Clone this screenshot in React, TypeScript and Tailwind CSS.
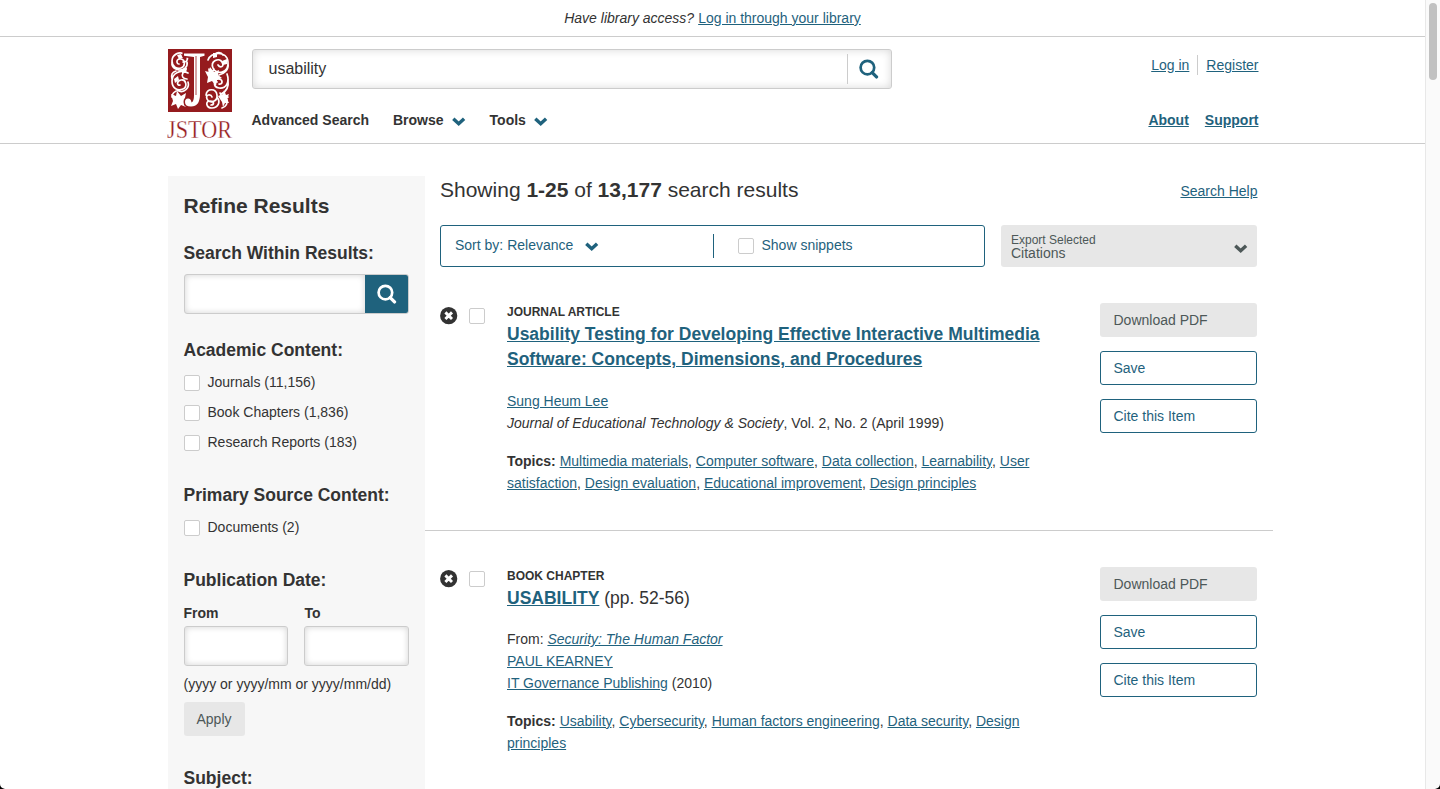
import React from "react";

const ink = "#333333";

function Chevron({ className = "" }: { className?: string }) {
  return (
    <svg width="14" height="10" viewBox="0 0 14 10" className={className} fill="none" stroke="currentColor" strokeWidth="3.4">
      <path d="M1.300 1.700 6.700 6.700 12.100 1.700" />
    </svg>
  );
}

function SearchIcon({ className = "" }: { className?: string }) {
  return (
    <svg width="20" height="20" viewBox="0 0 20 20" className={className} fill="none" stroke="currentColor" strokeWidth="2.7">
      <circle cx="8.400" cy="8.600" r="6.800" />
      <path d="M13.200 13.600l4.300 4.300" strokeWidth="3.3" strokeLinecap="round" />
    </svg>
  );
}

function Logo() {
  return (
    <svg width="66" height="92" viewBox="0 0 66 92" className="-ml-px shrink-0">
      <rect x="1" y="0" width="64" height="63" fill="#951b1e" />
      <g transform="translate(1 0)">
        <g fill="none" stroke="#fff" strokeWidth="1.700" strokeLinecap="round">
          <path d="M18 6C11 1 4 6 4 12s5 8 9 7 5-8 0-9-5 5-2 5M4 13c-1 7 8 10 14 7M18 6c3 3 1 8-3 7M19 13c1 5-3 8-7 8" />
          <path d="M20 24C13 20 4 24 4 32s6 10 11 8 3-10-2-9-4 6-1 5M20 33c2 6-4 11-9 9M8 22c-4 1-5 4-4 8M11 41c-4 1-7 3-7 7M15 24c-2 3 0 6 4 6" />
          <path d="M40 11C42 3 59 1 60 13s-12 13-15 6 6-11 9-6-2 6-4 3M60 14c1 7-4 11-9 12M55 6c-2-3-6-3-8-1M46 20c-1 3-4 4-6 4" />
          <path d="M41 20c0 9 4 10 8 13M59 25c3 8-1 15-8 14s-5-10 0-9 3 6 0 5M60 30c1 8-2 13-7 15" />
          <path d="M38 46c1-7 10-7 11 0s-8 9-10 4 4-5 5-2M49 48c4 5 1 11-5 11s-7-7-2-7 4 4 1 4M52 44c2 5 5 5 8 4M54 59c4-1 6-5 5-9" />
        </g>
        <g fill="#fff">
          <path d="M3 45l5 2 1-5 4 5 5-3-1 5 5 2-5 2 1 5-5-2-3 4-2-5-5 2 2-5z" />
          <path d="M37 22l4 1 1-5 4 5 5-2-1 5 4 3-5 2-1 6-4-5-5 2 1-6z" />
          <path d="M50 47l5-2 1-4 2 5 3-1-2 5 2 4-4 0-2 4-1-5z" />
          <path d="M9 6l4-1 2 4-4 1zM6 30l4-3 1 4-4 3zM14 20l5-1-1 5-4 0zM54 12l5-2 0 5-4 1zM45 4l4 0 0 4-4 1z" />
        </g>
        <path d="M16 4.500h20.500v2.300l-4.500 1.200V45q0 12.500-9 12.500-6 0-6-4.500 0-3.500 3-3.500 3 0 3.500 4 2.500-1 2.500-7V8L16 6.800z" fill="#fff" stroke="#951b1e" strokeWidth="3" paintOrder="stroke" />
        <path d="M28 7v39" stroke="#951b1e" strokeWidth="0.800" />
      </g>
      <text x="0" y="89" fill="#951b1e" fontFamily="'Liberation Serif', serif" fontSize="25" textLength="65" lengthAdjust="spacingAndGlyphs" stroke="#fff" strokeWidth="0.300">JSTOR</text>
    </svg>
  );
}

function Box({ className = "" }: { className?: string }) {
  return <span className={`block size-4 shrink-0 rounded-[2px] border border-[#ccc] bg-white ${className}`} />;
}

function Link({ children, className = "" }: { children: React.ReactNode; className?: string }) {
  return <a className={`text-[#1f627d] underline ${className}`}>{children}</a>;
}

function Option({ label }: { label: string }) {
  return (
    <label className="flex h-[30px] items-start">
      <Box className="mt-[3px]" />
      <span className="ml-[7.500px] leading-5">{label}</span>
    </label>
  );
}

function Field({ className = "" }: { className?: string }) {
  return <div className={`h-10 rounded-[3px] border border-[#ccc] bg-white shadow-[inset_0_0_6px_rgba(0,0,0,0.18)] ${className}`} />;
}

function Topics({ items }: { items: string[] }) {
  return (
    <p className="mt-4">
      <b>Topics:</b>{" "}
      {items.map((t, i) => (
        <React.Fragment key={t}>
          <Link>{t}</Link>
          {i < items.length - 1 ? ", " : ""}
        </React.Fragment>
      ))}
    </p>
  );
}

function Result({ kind, markOffset, children }: { kind: string; markOffset: string; children: React.ReactNode }) {
  return (
    <article className="flex h-[228px] items-start border-b border-[#ccc] pr-4 pl-[15px]">
      <div className={`flex w-[67px] items-start ${markOffset}`}>
        <svg width="18" height="18" viewBox="0 0 18 18">
          <circle cx="8.700" cy="8.700" r="8.600" fill={ink} />
          <path d="M5.400 5.400l6.600 6.600M12 5.400l-6.600 6.600" stroke="#fff" strokeWidth="2.900" />
        </svg>
        <Box className="mt-px ml-[11px]" />
      </div>
      <div className="w-[560px] leading-[22px]">
        <p className="text-xs leading-[18px] font-bold">{kind}</p>
        {children}
      </div>
      <div className="ml-auto flex w-[157px] flex-col gap-[14px]">
        <button className="h-[34px] rounded-[3px] bg-[#e7e7e7] pl-[13.500px] text-left text-[#4d5858]">Download PDF</button>
        <button className="h-[34px] rounded-[3px] border border-[#1f627d] pl-[12.500px] text-left text-[#1f627d]">Save</button>
        <button className="h-[34px] rounded-[3px] border border-[#1f627d] pl-[12.500px] text-left text-[#1f627d]">Cite this Item</button>
      </div>
    </article>
  );
}

function Sidebar() {
  return (
    <aside className="h-[613px] w-[257px] shrink-0 overflow-hidden bg-[#f7f7f7] pr-4 pl-[15.500px]">
      <h2 className="mt-[17px] text-[21px] leading-[26px] font-bold">Refine Results</h2>
      <h3 className="mt-[21px] text-[17.500px] leading-[26px] font-bold">Search Within Results:</h3>
      <div className="mt-2 ml-[0.500px] flex h-10 w-[225px] overflow-hidden rounded-[3px] border border-[#ccc] bg-white">
        <div className="flex-1 shadow-[inset_0_0_6px_rgba(0,0,0,0.18)]" />
        <button className="flex w-[43px] items-center justify-center bg-[#1f627d] text-white">
          <SearchIcon />
        </button>
      </div>
      <h3 className="mt-[23px] text-[17.500px] leading-[26px] font-bold">Academic Content:</h3>
      <div className="mt-[9px] pl-[0.500px]">
        <Option label="Journals (11,156)" />
        <Option label="Book Chapters (1,836)" />
        <Option label="Research Reports (183)" />
      </div>
      <h3 className="mt-5 text-[17.500px] leading-[26px] font-bold">Primary Source Content:</h3>
      <div className="mt-[9px] pl-[0.500px]">
        <Option label="Documents (2)" />
      </div>
      <h3 className="mt-5 text-[17.500px] leading-[26px] font-bold">Publication Date:</h3>
      <div className="mt-[10px] flex gap-4 pl-[0.500px] font-bold">
        <div className="w-[104px] leading-5">
          <span className="-ml-[0.500px]">From</span>
          <Field className="mt-[3px]" />
        </div>
        <div className="w-[105px] leading-5">
          <span className="ml-[0.500px]">To</span>
          <Field className="mt-[3px]" />
        </div>
      </div>
      <p className="mt-2 leading-5">(yyyy or yyyy/mm or yyyy/mm/dd)</p>
      <button className="mt-2 ml-[0.500px] h-[34px] w-[61px] rounded-[3px] bg-[#e7e7e7] pr-px text-[#4d5858]">Apply</button>
      <h3 className="mt-[29px] text-[17.500px] leading-[26px] font-bold">Subject:</h3>
    </aside>
  );
}

export default function App() {
  return (
    <div className="relative flex h-[789px] w-[1440px] overflow-hidden bg-white font-['Liberation_Sans',Arial,sans-serif] text-sm text-[#333]">
      <div className="w-[1425px]">
        <div className="flex h-[37px] items-center justify-center gap-1 border-b border-[#ccc]">
          <i>Have library access?</i>
          <Link>Log in through your library</Link>
        </div>
        <header className="h-[107px] border-b border-[#ccc] pt-3 pl-[168px]">
          <div className="flex w-[1090.500px] items-start">
            <Logo />
            <div className="ml-[19px] w-[640px]">
              <div className="flex h-10 items-center rounded-[3px] border border-[#ccc] pl-[15.500px] text-base shadow-[inset_0_0_8px_rgba(0,0,0,0.16)]">
                <span className="flex-1">usability</span>
                <div className="flex h-[30px] w-[44px] items-center justify-center border-l border-[#ccc] pr-[1px] text-[#1f627d]">
                  <SearchIcon />
                </div>
              </div>
              <nav className="mt-[21px] -ml-[0.500px] flex items-center leading-5 font-bold">
                <span>Advanced Search</span>
                <span className="ml-6">Browse</span>
                <Chevron className="mt-[3px] ml-2 text-[#1f627d]" />
                <span className="ml-6">Tools</span>
                <Chevron className="mt-[3px] ml-2 text-[#1f627d]" />
              </nav>
            </div>
            <div className="ml-auto flex flex-col items-end">
              <div className="mt-[6px] flex h-5 items-center">
                <Link>Log in</Link>
                <span className="mx-2 h-5 w-px bg-[#ccc]" />
                <Link>Register</Link>
              </div>
              <div className="mt-[35px] flex gap-4 leading-5 font-bold">
                <Link>About</Link>
                <Link>Support</Link>
              </div>
            </div>
          </div>
        </header>
        <div className="mt-8 flex pl-[168px]">
          <Sidebar />
          <main className="w-[848px]">
            <div className="flex h-[49px] items-start justify-between pr-[15.500px] pl-[15px]">
              <h1 className="text-[21px] leading-7">
                Showing <b>1-25</b> of <b>13,177</b> search results
              </h1>
              <Link className="mt-[5px] leading-5">Search Help</Link>
            </div>
            <div className="flex h-[42px] justify-between pr-4 pl-[15px]">
              <div className="flex w-[545px] items-center rounded-[3px] border border-[#1f627d] pl-[14px] text-[#1f627d]">
                <div className="flex h-6 w-[259px] items-center border-r border-[#1f627d]">
                  <span className="-mt-[2px]">Sort by: Relevance</span>
                  <Chevron className="mt-[2px] ml-3" />
                </div>
                <Box className="ml-6" />
                <span className="-mt-[2px] ml-[7.500px]">Show snippets</span>
              </div>
              <div className="flex w-64 items-center justify-between rounded-[3px] bg-[#e7e7e7] pr-[9px] pl-[10px] text-[#4d5858]">
                <div className="mt-[2px] leading-[13px]">
                  <div className="text-xs leading-[13px]">Export Selected</div>
                  Citations
                </div>
                <Chevron className="mt-[5px]" />
              </div>
            </div>
            <div className="mt-9 flex flex-col gap-9">
              <Result kind="JOURNAL ARTICLE" markOffset="mt-1">
                <h2 className="mt-px text-[17.500px] leading-[25px] font-bold">
                  <Link>Usability Testing for Developing Effective Interactive Multimedia Software: Concepts, Dimensions, and Procedures</Link>
                </h2>
                <p className="mt-[18px]"><Link>Sung Heum Lee</Link></p>
                <p><i>Journal of Educational Technology &amp; Society</i>, Vol. 2, No. 2 (April 1999)</p>
                <Topics items={["Multimedia materials", "Computer software", "Data collection", "Learnability", "User satisfaction", "Design evaluation", "Educational improvement", "Design principles"]} />
              </Result>
              <Result kind="BOOK CHAPTER" markOffset="mt-[3px]">
                <h2 className="mt-px text-[17.500px] leading-[25px]">
                  <Link className="font-bold">USABILITY</Link> (pp. 52-56)
                </h2>
                <p className="mt-[17px]">From: <Link className="italic">Security: The Human Factor</Link></p>
                <p><Link>PAUL KEARNEY</Link></p>
                <p><Link>IT Governance Publishing</Link> (2010)</p>
                <Topics items={["Usability", "Cybersecurity", "Human factors engineering", "Data security", "Design principles"]} />
              </Result>
            </div>
          </main>
        </div>
      </div>
      <div className="w-[15px] border-l border-[#e8e8e8] bg-[#fafafa] pt-[3px] pl-[3px]">
        <div className="h-[77px] w-2 rounded-full bg-[#c1c1c1]" />
      </div>
      <svg className="absolute bottom-0 left-0" width="5" height="5"><path d="M0 0Q0 4 5 5H0Z" /></svg>
      <svg className="absolute right-0 bottom-0" width="5" height="5"><path d="M5 0Q5 4 0 5H5Z" /></svg>
    </div>
  );
}
